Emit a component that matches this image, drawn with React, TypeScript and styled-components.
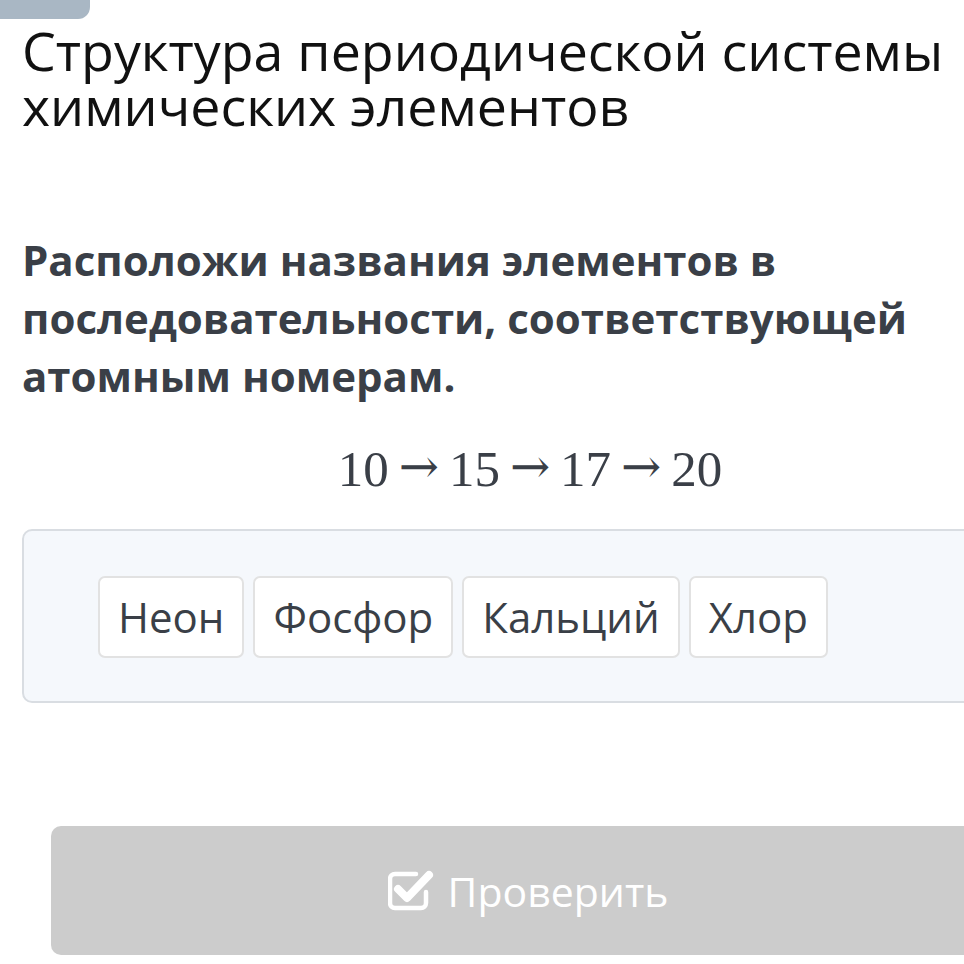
import React from "react";
import styled, { createGlobalStyle } from "styled-components";

const GlobalStyle = createGlobalStyle`
  html, body {
    margin: 0;
    padding: 0;
    background: #ffffff;
    overflow: hidden;
  }
  body {
    font-family: "Open Sans", "Noto Sans", sans-serif;
  }
`;

const Tab = styled.div`
  width: 90px;
  height: 19px;
  background: #a9b7c4;
  border-bottom-right-radius: 12px;
`;

const Content = styled.div`
  width: 1012px;
  padding: 0 22px;
  display: flex;
  flex-direction: column;
`;

const Title = styled.h1`
  margin: 4px 0 0;
  font-size: 53.7px;
  line-height: 55px;
  font-weight: 400;
  color: #111111;
`;

const Question = styled.p`
  margin: 98px 0 0;
  font-size: 42px;
  line-height: 58px;
  font-weight: 700;
  color: #3a3f47;
  width: 920px;
`;

const MathLine = styled.div`
  margin-top: 36px;
  display: flex;
  justify-content: center;
  align-items: center;
  gap: 10px;
  line-height: 56px;
  color: #3a3f47;
  padding-left: 4px;
`;

const Num = styled.span`
  font-family: "Liberation Serif", serif;
  font-size: 51px;
`;

const Arrow = styled.span`
  font-family: "DejaVu Serif", serif;
  font-size: 48px;
  position: relative;
  top: -3px;
`;

const Pool = styled.div`
  margin-top: 32px;
  height: 174px;
  box-sizing: border-box;
  border: 2px solid #d9dde2;
  border-radius: 10px;
  background: #f5f8fc;
  display: flex;
  align-items: center;
  gap: 9px;
  padding-left: 74px;
  padding-top: 2px;
`;

const Chip = styled.div`
  height: 82px;
  box-sizing: border-box;
  display: flex;
  align-items: center;
  padding: 0 18px 2px;
  background: #ffffff;
  border: 2px solid #e2e2e2;
  border-radius: 7px;
  font-size: 42px;
  color: #3a3f47;
`;

const CheckButton = styled.button`
  margin: 123px 0 0 29px;
  width: 954px;
  height: 129px;
  border: none;
  border-radius: 10px;
  background: #cccccc;
  color: #ffffff;
  font-family: "Open Sans", sans-serif;
  font-size: 41px;
  display: flex;
  align-items: center;
  justify-content: center;
  gap: 14px;
  padding: 0;
`;

const CheckIcon = () => (
  <svg width="46" height="42" viewBox="0 0 46 42" fill="none">
    <path
      d="M38 22 V33 a5 5 0 0 1 -5 5 H7 a5 5 0 0 1 -5 -5 V9 a5 5 0 0 1 5 -5 H28"
      stroke="#ffffff"
      strokeWidth="4.5"
      strokeLinecap="round"
      strokeLinejoin="round"
    />
    <path
      d="M10 19 L19 28 L41 5"
      stroke="#ffffff"
      strokeWidth="8"
      strokeLinecap="round"
      strokeLinejoin="round"
    />
  </svg>
);

const elements = ["Неон", "Фосфор", "Кальций", "Хлор"];
const numbers = ["10", "15", "17", "20"];

export default function App() {
  return (
    <>
      <GlobalStyle />
      <Tab />
      <Content>
        <Title>Структура периодической системы химических элементов</Title>
        <Question>
          Расположи названия элементов в последовательности, соответствующей
          атомным номерам.
        </Question>
        <MathLine>
          {numbers.map((n, i) => (
            <React.Fragment key={n}>
              {i > 0 && <Arrow>→</Arrow>}
              <Num>{n}</Num>
            </React.Fragment>
          ))}
        </MathLine>
        <Pool>
          {elements.map((e) => (
            <Chip key={e}>{e}</Chip>
          ))}
        </Pool>
        <CheckButton>
          <CheckIcon />
          Проверить
        </CheckButton>
      </Content>
    </>
  );
}
